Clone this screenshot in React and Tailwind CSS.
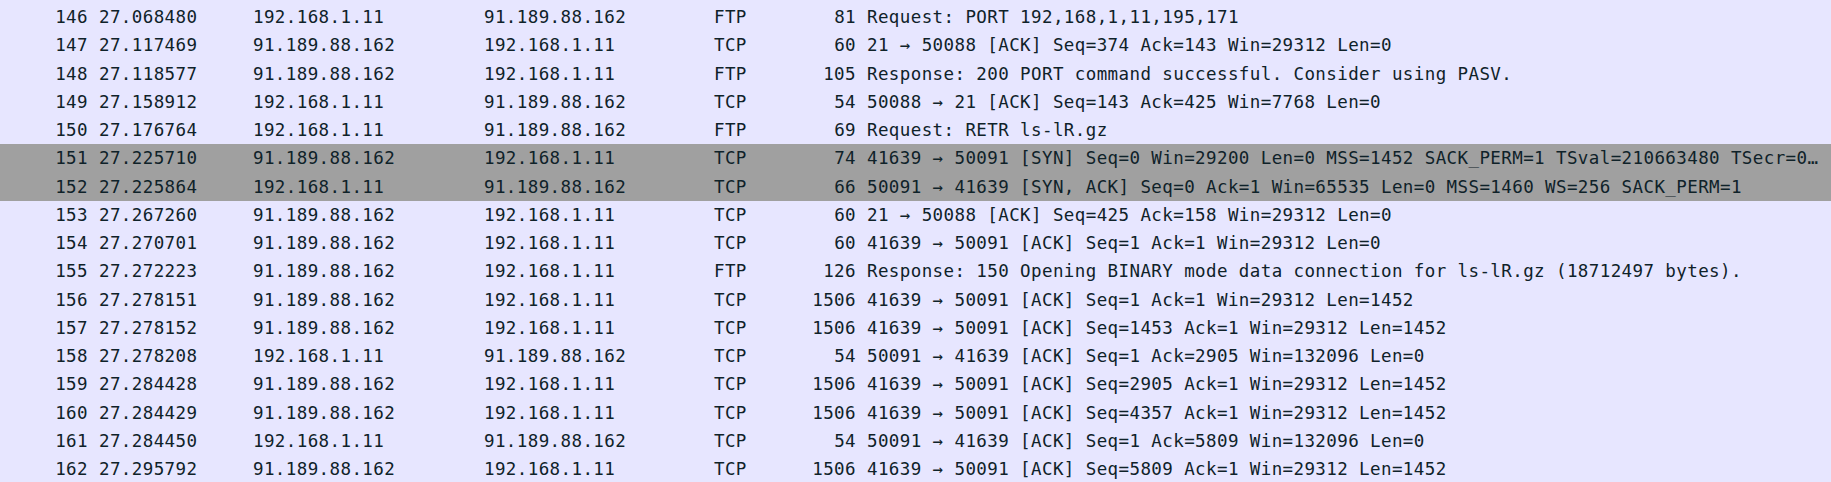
const packets = [
  ["146", "27.068480", "192.168.1.11", "91.189.88.162", "FTP", "81", "Request: PORT 192,168,1,11,195,171"],
  ["147", "27.117469", "91.189.88.162", "192.168.1.11", "TCP", "60", "21 → 50088 [ACK] Seq=374 Ack=143 Win=29312 Len=0"],
  ["148", "27.118577", "91.189.88.162", "192.168.1.11", "FTP", "105", "Response: 200 PORT command successful. Consider using PASV."],
  ["149", "27.158912", "192.168.1.11", "91.189.88.162", "TCP", "54", "50088 → 21 [ACK] Seq=143 Ack=425 Win=7768 Len=0"],
  ["150", "27.176764", "192.168.1.11", "91.189.88.162", "FTP", "69", "Request: RETR ls-lR.gz"],
  ["151", "27.225710", "91.189.88.162", "192.168.1.11", "TCP", "74", "41639 → 50091 [SYN] Seq=0 Win=29200 Len=0 MSS=1452 SACK_PERM=1 TSval=210663480 TSecr=0…", true],
  ["152", "27.225864", "192.168.1.11", "91.189.88.162", "TCP", "66", "50091 → 41639 [SYN, ACK] Seq=0 Ack=1 Win=65535 Len=0 MSS=1460 WS=256 SACK_PERM=1", true],
  ["153", "27.267260", "91.189.88.162", "192.168.1.11", "TCP", "60", "21 → 50088 [ACK] Seq=425 Ack=158 Win=29312 Len=0"],
  ["154", "27.270701", "91.189.88.162", "192.168.1.11", "TCP", "60", "41639 → 50091 [ACK] Seq=1 Ack=1 Win=29312 Len=0"],
  ["155", "27.272223", "91.189.88.162", "192.168.1.11", "FTP", "126", "Response: 150 Opening BINARY mode data connection for ls-lR.gz (18712497 bytes)."],
  ["156", "27.278151", "91.189.88.162", "192.168.1.11", "TCP", "1506", "41639 → 50091 [ACK] Seq=1 Ack=1 Win=29312 Len=1452"],
  ["157", "27.278152", "91.189.88.162", "192.168.1.11", "TCP", "1506", "41639 → 50091 [ACK] Seq=1453 Ack=1 Win=29312 Len=1452"],
  ["158", "27.278208", "192.168.1.11", "91.189.88.162", "TCP", "54", "50091 → 41639 [ACK] Seq=1 Ack=2905 Win=132096 Len=0"],
  ["159", "27.284428", "91.189.88.162", "192.168.1.11", "TCP", "1506", "41639 → 50091 [ACK] Seq=2905 Ack=1 Win=29312 Len=1452"],
  ["160", "27.284429", "91.189.88.162", "192.168.1.11", "TCP", "1506", "41639 → 50091 [ACK] Seq=4357 Ack=1 Win=29312 Len=1452"],
  ["161", "27.284450", "192.168.1.11", "91.189.88.162", "TCP", "54", "50091 → 41639 [ACK] Seq=1 Ack=5809 Win=132096 Len=0"],
  ["162", "27.295792", "91.189.88.162", "192.168.1.11", "TCP", "1506", "41639 → 50091 [ACK] Seq=5809 Ack=1 Win=29312 Len=1452"],
];

export default function App() {
  return (
    <div
      className="w-[1831px] h-[482px] overflow-hidden bg-[#e7e6ff] pt-[3px] text-[#0f2229] text-[17.5px] tracking-[0.4px] whitespace-nowrap"
      style={{ fontFamily: '"DejaVu Sans Mono", "Liberation Mono", monospace' }}
    >
      {packets.map(([no, time, src, dst, proto, len, info, marked]) => (
        <div
          key={no}
          className={`flex h-[28.25px] leading-[28.25px] ${
            marked ? "bg-[#a0a0a0]" : "bg-[#e7e6ff]"
          }`}
        >
          <div className="w-[88px] shrink-0 text-right">{no}</div>
          <div className="w-[165px] shrink-0 pl-[11px]">{time}</div>
          <div className="w-[231px] shrink-0">{src}</div>
          <div className="w-[230px] shrink-0">{dst}</div>
          <div className="w-[66px] shrink-0">{proto}</div>
          <div className="w-[76px] shrink-0 text-right">{len}</div>
          <div className="w-[964px] shrink-0 pl-[11px] overflow-hidden">{info}</div>
        </div>
      ))}
    </div>
  );
}
